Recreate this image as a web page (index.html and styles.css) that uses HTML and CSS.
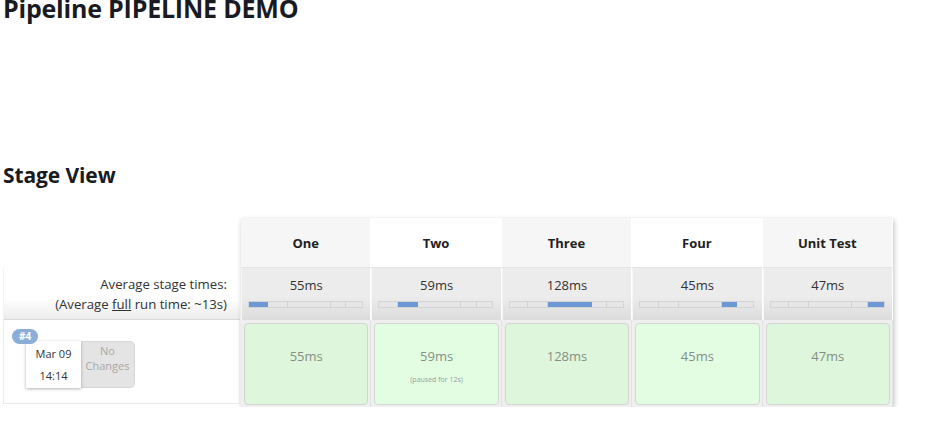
FILE: index.html
```html
<!DOCTYPE html>
<html>
<head>
<meta charset="utf-8">
<link rel="stylesheet" href="styles.css">
</head>
<body>
<h1 class="title">Pipeline PIPELINE DEMO</h1>
<h2 class="section">Stage View</h2>
<div class="stage-view">
  <div class="left">
    <div class="left-head"></div>
    <div class="left-avg">
      <div>Average stage times:</div>
      <div>(Average <u>full</u> run time: ~13s)</div>
    </div>
    <div class="left-run">
      <span class="badge">#4</span>
      <div class="run-info">
        <div class="date"><div>Mar 09</div><div>14:14</div></div>
        <div class="changes">No<br>Changes</div>
      </div>
    </div>
  </div>
  <div class="stages">
    <div class="head odd">One</div>
    <div class="head even">Two</div>
    <div class="head odd">Three</div>
    <div class="head even">Four</div>
    <div class="head odd">Unit Test</div>

    <div class="avg"><div>55ms</div><div class="bar"><i class="on"></i><i></i><i></i><i></i><i></i></div></div>
    <div class="avg"><div>59ms</div><div class="bar"><i></i><i class="on"></i><i></i><i></i><i></i></div></div>
    <div class="avg"><div>128ms</div><div class="bar"><i></i><i></i><i class="on"></i><i></i><i></i></div></div>
    <div class="avg"><div>45ms</div><div class="bar"><i></i><i></i><i></i><i class="on"></i><i></i></div></div>
    <div class="avg"><div>47ms</div><div class="bar"><i></i><i></i><i></i><i></i><i class="on"></i></div></div>

    <div class="run"><div class="box odd">55ms</div></div>
    <div class="run"><div class="box even">59ms<span class="paused">(paused for 12s)</span></div></div>
    <div class="run"><div class="box odd">128ms</div></div>
    <div class="run"><div class="box even">45ms</div></div>
    <div class="run"><div class="box odd">47ms</div></div>
  </div>
</div>
</body>
</html>
```
FILE: styles.css
```css
html, body { margin: 0; padding: 0; background: #fff; }
body {
  padding-left: 3px;
  font-family: "Open Sans", "Noto Sans", sans-serif;
  color: #333;
  overflow: hidden;
}
.title {
  margin: 0;
  font-size: 25px;
  line-height: 16px;
  font-weight: 700;
  color: #1a1a22;
  letter-spacing: -0.2px;
}
.section {
  margin: 147px 0 0;
  font-size: 21px;
  line-height: 24px;
  font-weight: 700;
  color: #1a1a22;
  letter-spacing: -0.1px;
}
.stage-view {
  display: flex;
  margin-top: 31px;
}
.left { width: 237px; display: flex; flex-direction: column; }
.left-head { height: 50px; }
.left-avg {
  height: 52px;
  border-left: 1px solid #f2f2f2;
  border-bottom: 1px solid #d8d8d8;
  background: linear-gradient(#fff 60%, #ececec);
  text-align: right;
  padding-right: 13px;
  font-size: 13.2px;
  line-height: 20px;
  color: #333;
  display: flex;
  flex-direction: column;
  justify-content: center;
  padding-top: 1px;
  box-sizing: border-box;
}
.left-run {
  position: relative;
  height: 84px;
  border: 1px solid #eaeaea;
  border-top: none;
  box-sizing: border-box;
}
.badge {
  position: absolute;
  left: 8px;
  top: 9px;
  background: #8aaed6;
  color: #fff;
  font-size: 10px;
  font-weight: 700;
  line-height: 15px;
  padding: 0 7px;
  border-radius: 8px;
  z-index: 2;
}
.run-info {
  display: flex;
  margin: 21px 0 0 22px;
}
.date {
  width: 55px;
  height: 47px;
  background: #fff;
  box-shadow: 0 1px 3px rgba(0,0,0,0.3);
  font-size: 11px;
  color: #333;
  text-align: center;
  display: flex;
  flex-direction: column;
  justify-content: center;
  line-height: 22px;
  position: relative;
  z-index: 1;
}
.changes {
  width: 54px;
  height: 47px;
  box-sizing: border-box;
  background: #e4e4e4;
  border: 1px solid #d6d6d6;
  border-left: none;
  border-radius: 0 5px 5px 0;
  color: #a8a8a8;
  font-size: 11px;
  line-height: 15px;
  text-align: center;
  padding-top: 1px;
}
.stages {
  display: grid;
  grid-template-columns: repeat(5, 130.4px);
  grid-template-rows: 50px 52px 87px;
  margin-left: 1px;
  box-shadow: 1px 2px 5px rgba(0,0,0,0.25);
  background: #fff;
}
.head {
  display: flex;
  align-items: center;
  justify-content: center;
  font-size: 13px;
  font-weight: 700;
  color: #222;
  border-right: 1px solid #fff;
  border-bottom: 1px solid #e4e4e4;
}
.head.odd { background: #f6f6f6; }
.head.even { background: #fff; }
.avg {
  background: linear-gradient(#ececec 55%, #dcdcdc);
  border-right: 1px solid #fff;
  border-left: 1px solid #f6f6f6;
  text-align: center;
  font-size: 13px;
  color: #333;
  padding-top: 9px;
  box-sizing: border-box;
  line-height: 17px;
}
.bar {
  display: flex;
  width: 113px;
  height: 5px;
  margin: 7px 0 0 6px;
  border: 1px solid #d4d4d4;
  background: #e6e6e6;
}
.bar i { display: block; height: 100%; border-right: 1px solid #d0d0d0; box-sizing: border-box; }
.bar i:last-child { border-right: none; }
.bar i:nth-child(1) { width: 16.5%; }
.bar i:nth-child(2) { width: 17.7%; }
.bar i:nth-child(3) { width: 38.3%; }
.bar i:nth-child(4) { width: 13.5%; }
.bar i:nth-child(5) { width: 14%; }
.bar i.on { background: #6d98d6; border-right-color: #6d98d6; }
.run {
  background: #efefef;
  padding: 3px 2px 2px 3px;
  border-right: 1px solid #e2e2e2;
}
.box {
  height: 100%;
  box-sizing: border-box;
  border: 1px solid #d4d4d4;
  border-radius: 4px;
  display: flex;
  flex-direction: column;
  align-items: center;
  color: #858f85;
  font-size: 13px;
  padding-top: 24px;
  line-height: 17px;
}
.box.odd { background: #ddf6dc; }
.box.even { background: #e3fde3; }
.paused {
  font-size: 7px;
  line-height: 10px;
  margin-top: 10px;
  color: #9aa09a;
}
```
